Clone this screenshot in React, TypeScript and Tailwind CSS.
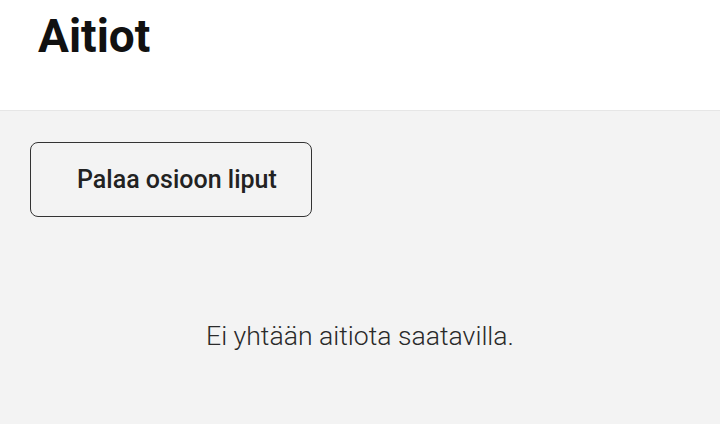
export default function App() {
    return (
        <div className="min-h-screen bg-[#f3f3f3] font-['Roboto',sans-serif] text-[#1a1a1a]">
            <header className="h-[111px] bg-white border-b border-[#e6e6e6] px-[38px] pt-[8px]">
                <h1 className="text-[46px] font-bold leading-[56px] tracking-[0px] text-[#111]">
                    Aitiot
                </h1>
            </header>
            <main className="px-[30px] pt-[31px]">
                <button className="w-[282px] h-[75px] rounded-[8px] border border-[#333] pl-[46px] text-left text-[25px] font-medium text-[#222]">
                    Palaa osioon liput
                </button>
                <p className="mt-[99px] text-center text-[26.6px] font-light text-[#2a2a2a]">
                    Ei yhtään aitiota saatavilla.
                </p>
            </main>
        </div>
    );
}
